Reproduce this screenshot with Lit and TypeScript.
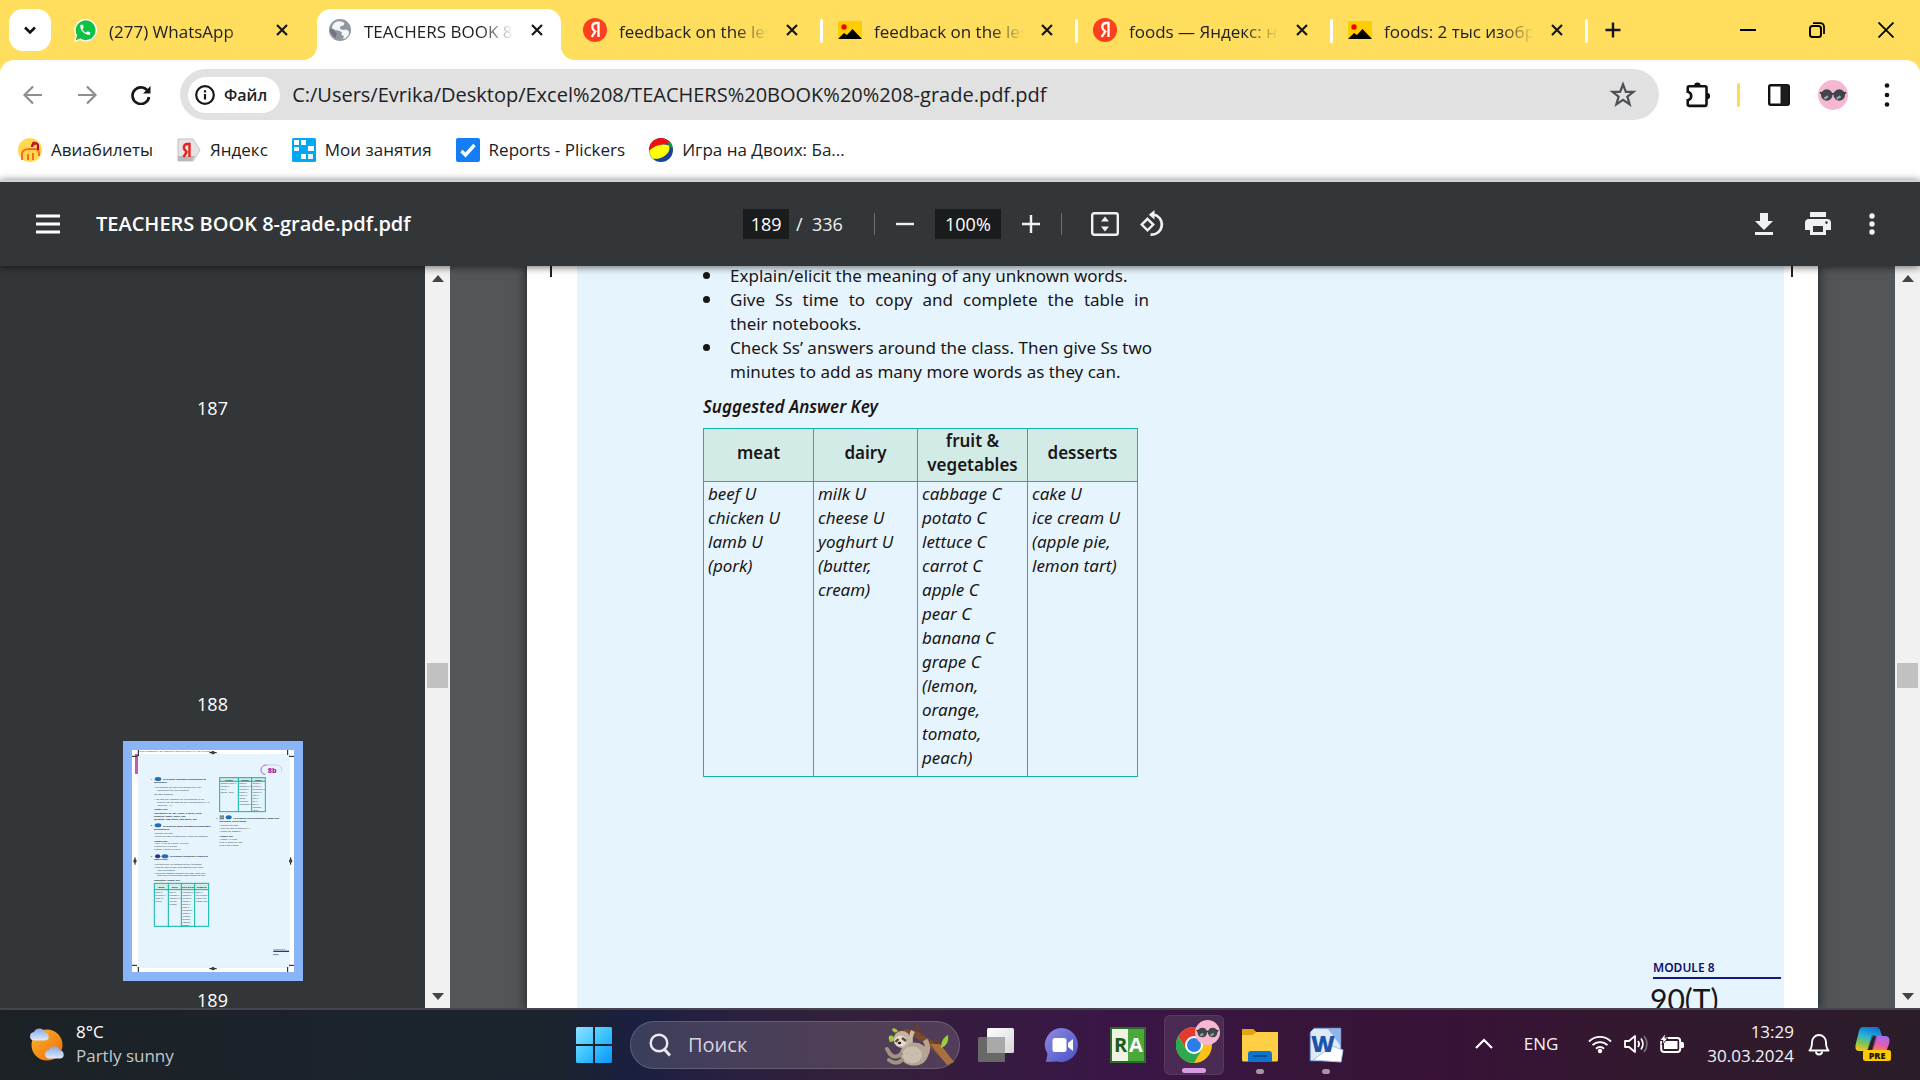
import { LitElement, html, svg, css, nothing } from "lit";
import { customElement } from "lit/decorators.js";
import { classMap } from "lit/directives/class-map.js";

const phone =
  "M6.62 10.79c1.44 2.83 3.76 5.14 6.59 6.59l2.2-2.2c.27-.27.67-.36 1.02-.24 1.12.37 2.33.57 3.57.57.55 0 1 .45 1 1V20c0 .55-.45 1-1 1-9.39 0-17-7.61-17-17 0-.55.45-1 1-1h3.5c.55 0 1 .45 1 1 0 1.25.2 2.45.57 3.57.11.35.03.74-.25 1.02l-2.2 2.2z";

const icon = (size: number, body: unknown, box = "0 0 24 24") =>
  html`<svg width=${size} height=${size} viewBox=${box} fill="none" aria-hidden="true">${body}</svg>`;

const favicons: Record<string, unknown> = {
  whatsapp: icon(24, svg`
    <path d="M1 24l1.800-6.300A11.300 11.300 0 1 1 7 22z" fill="#fff"/>
    <path d="M2.700 22.200l1.400-4.900A9.900 9.900 0 1 1 7.300 20.600z" fill="#0cc143"/>
    <g transform="translate(5.600 5.200) scale(.55)"><path d=${phone} fill="#fff"/></g>`),
  globe: icon(24, svg`
    <circle cx="12" cy="12" r="11" fill="#8f969e"/>
    <path d="M13.500 3.500l3 1.500-1 2.500-3 .8-.8 2.400 3.300 1.300 3.500-.6 2.500 2.200-.3 3.400-3 3.200-2.500.8.600-3-2.300-1.200.3-2.500-2.500-1.500-4-.8-3.400-2 .6-2.500L6 5l3.500-1.800z" fill="#f4f6f7"/>
    <path d="M2 11l4 1.500 2.800 3-1 4.200C4.500 18.500 2 15 2 11z" fill="#6e757d"/>`),
  yandex: icon(24, svg`
    <circle cx="12" cy="12" r="12" fill="#fc3f1d"/>
    <path d="M15.500 19V5h-2.200c-2.500 0-4 1.500-4 3.900 0 1.900.9 3 2.700 4.200M12.800 12.600L8.700 19" stroke="#fff" stroke-width="2.300"/>`),
  images: icon(24, svg`
    <path d="M0 3h24v18H0z" fill="#fc0"/><circle cx="6" cy="9" r="2.700" fill="#f00000"/>
    <path d="M0 21l6-6 3 2 5.500-6L24 21z" fill="#000"/>`),
  avia: icon(24, svg`
    <circle cx="12" cy="12" r="12" fill="#ffd84d"/>
    <path d="M4 22v-6c0-4 3-5 8-5h3c4 0 6 1 6 4v3M10 22v-6M15 22v-7" stroke="#fb6a2c" stroke-width="2"/>
    <path d="M14 9c0-5 6-5 6-1v4" stroke="#a5122a" stroke-width="2.200"/><circle cx="16" cy="5.500" r="2" fill="#c4173a"/>`),
  yaold: icon(24, svg`
    <path d="M1 1h15l7 11-7 11H1z" fill="#e4e4e4" stroke="#c2c2c2"/><path d="M1 18h17l-3 5H1z" fill="#b9b9b9"/>
    <path d="M12.500 19V6h-2c-2.300 0-3.600 1.400-3.600 3.500 0 1.700.9 2.800 2.400 3.600M10.300 13L6.500 19" stroke="#e8231d" stroke-width="2.400"/>`),
  lessons: icon(24, svg`
    <rect width="24" height="24" rx="1.500" fill="#00a8f0"/>
    <path d="M2 2h5v5H2zM9 2h5v5H9zM16 8h6v5h-6zM2 9h5v4H2zM2 16h5v5H2zM9 16h5v5H9zM16 16h5v5h-5z" fill="#fff"/>
    <path d="M2 9h5v4H2zM16 16h5v5h-5z" fill="#e6f7ff"/><path d="M1 15h7v7H1z" fill="#00a8f0"/>`),
  plickers: icon(24, svg`
    <rect width="24" height="24" rx="2" fill="#147df5"/>
    <path d="M5.500 13l4 4 9-10" stroke="#fff" stroke-width="3.400"/>`),
  ball: icon(24, svg`
    <circle cx="12" cy="12" r="12" fill="#17439b"/>
    <path d="M0 13A12 12 0 0 1 22 5.500C15 6 6 7 0 13z" fill="#f11010"/>
    <path d="M20 3a12 12 0 0 1 4 8c-2-2-3-3-5-4z" fill="#1c9a3b"/>
    <path d="M.3 12.500C6 7 14 5 20 7.500c2 5-2 10-8.500 12.500-3 1-6 1-8 .5C1.500 18 .3 15.500.3 12.500z" fill="#ff0"/>`),
};

const close = icon(16, svg`<path d="M3 3l10 10M13 3L3 13" stroke="#15171c" stroke-width="2.200"/>`, "0 0 16 16");

const tabs = [
  { title: "(277) WhatsApp", icon: "whatsapp", active: false, rule: false },
  { title: "TEACHERS BOOK 8-grade.pdf", icon: "globe", active: true, rule: false },
  { title: "feedback on the lesson", icon: "yandex", active: false, rule: true },
  { title: "feedback on the lesson", icon: "images", active: false, rule: true },
  { title: "foods — Яндекс: нашлось", icon: "yandex", active: false, rule: true },
  { title: "foods: 2 тыс изображений", icon: "images", active: false, rule: true },
];

const bookmarks = [
  ["avia", "Авиабилеты"],
  ["yaold", "Яндекс"],
  ["lessons", "Мои занятия"],
  ["plickers", "Reports - Plickers"],
  ["ball", "Игра на Двоих: Ба..."],
];

const foods = [
  { head: ["meat"], items: ["beef U", "chicken U", "lamb U", "(pork)"] },
  { head: ["dairy"], items: ["milk U", "cheese U", "yoghurt U", "(butter,", "cream)"] },
  {
    head: ["fruit &", "vegetables"],
    items: ["cabbage C", "potato C", "lettuce C", "carrot C", "apple C", "pear C", "banana C", "grape C", "(lemon,", "orange,", "tomato,", "peach)"],
  },
  { head: ["desserts"], items: ["cake U", "ice cream U", "(apple pie,", "lemon tart)"] },
];

// Tiny page preview; each entry is x, y, text.
const previewLines: [number, number, string][] = [
  [162, 174, "•  Go through the table with Ss and elicit the"],
  [172, 183, "equivalents for the examples."],
  [162, 194, "(Ss' own answers)"],
  [162, 210, "•  Ask and elicit answers for the question in the"],
  [172, 219, "Explain that we also use any in questions (e.g. Is"],
  [172, 227, "there any ...?)."],
  [162, 311, "•  Explain the task."],
  [162, 320, "•  Ss do the task in closed pairs. Check Ss' answers"],
  [162, 343, "1  any       4  a lot of    7  much     10  a few"],
  [162, 352, "2  much    5  a little      8  no"],
  [162, 361, "3  many    6  much     9  a lot of"],
  [162, 406, "•  Explain/elicit the meaning of any unknown"],
  [162, 415, "•  Give Ss time to copy and complete the table"],
  [172, 423, "their notebooks."],
  [162, 431, "•  Check Ss' answers around the class. Then give"],
  [172, 439, "minutes to add as many more words as they"],
  [358, 288, "•  Explain the task."],
  [358, 296, "•  Give Ss time to complete it."],
  [358, 305, "•  Check Ss' answers."],
  [358, 329, "1  some         4  a              7  any"],
  [358, 338, "2  any           5  much       8  a few"],
  [358, 347, "3  an             6  not            9  many"],
];
const previewHeads: [number, number, string][] = [
  [189, 151, "To present countable/uncountable &"],
  [162, 159, "quantifiers"],
  [162, 239, "Answer Key"],
  [162, 251, "Affirmative: so, any, many, a lot of, a few"],
  [162, 260, "Negative: many, much, any"],
  [162, 269, "Question: how many, how much, any"],
  [189, 290, "To practise using countable/uncountable"],
  [162, 299, "& quantifiers"],
  [162, 335, "Answer Key"],
  [210, 382, "To present vocabulary related to"],
  [162, 391, "food/drinks"],
  [162, 454, "Suggested Answer Key"],
  [400, 266, "To practise using quantifiers, some and"],
  [358, 275, "any/many, much/many"],
  [358, 320, "Answer Key"],
];

const previewTable = (xs: number[], top: number, head: number, bottom: number, heads: string[], cols: string[][]) => svg`
  <path d="M${xs[0]} ${top}H${xs[xs.length - 1]}V${head}H${xs[0]}z" fill="#d2ebe7"/>
  <path d="M${xs[0]} ${top}H${xs[xs.length - 1]}M${xs[0]} ${head}H${xs[xs.length - 1]}M${xs[0]} ${bottom}H${xs[xs.length - 1]}" stroke="#0bb5a8" stroke-width="3"/>
  ${xs.map((x) => svg`<path d="M${x} ${top - 1}V${bottom + 1}" stroke="#0bb5a8" stroke-width="3"/>`)}
  ${heads.map((h, i) => svg`<text class="ph" x=${(xs[i] + xs[i + 1]) / 2} y=${(top + head) / 2 + 3} text-anchor="middle">${h}</text>`)}
  ${cols.map((c, i) => c.map((t, j) => svg`<text class="pt" x=${xs[i] + 3} y=${head + 9 + j * 9}>${t}</text>`))}`;

const mark = (x: number, y: number, r: number) => svg`
  <g transform="translate(${x} ${y}) rotate(${r})"><path d="M-11 0H11" stroke="#111" stroke-width="3"/><circle r="5" fill="#222"/><circle r="1.500" fill="#bbb"/></g>`;

const preview = html`<svg class="preview" viewBox="96 60 486 666" aria-hidden="true">
  <path d="M96 60h486v666H96z" fill="#fff"/>
  <path d="M114 72h456v642H114z" fill="#e6f5fd"/>
  <path d="M105 72h9v60h-9z" fill="#c65ba6"/>
  <text class="pt" x="118" y="67">Excel 8 Teacher's 189_Module 8 / Excel 8 T 29/01/19 1:52 PM Page 90</text>
  <path d="M115 60v18M96 79h16M563 60v15M567 79h15M96 706h15M115 711v15M563 711v15M567 706h15" stroke="#111" stroke-width="3"/>
  ${mark(339, 68, 0)}${mark(339, 716, 0)}${mark(105, 393, 90)}${mark(572, 393, 90)}
  <path d="M500 105c-22 0-22 28-4 28" stroke="#b65bb2" stroke-width="3" fill="none"/>
  <path d="M495 105h34c18 0 18 18 14 22" stroke="#d5a6d6" stroke-width="2" fill="none"/>
  <text class="unit" x="503" y="129">8b</text>
  <g fill="#1f6fb5"><ellipse cx="174" cy="147" rx="10" ry="6"/><ellipse cx="174" cy="286" rx="10" ry="6"/><ellipse cx="195" cy="379" rx="10" ry="6"/><ellipse cx="386" cy="262" rx="9" ry="6"/></g>
  <ellipse cx="173" cy="379" rx="8" ry="6" fill="#2c318e"/>
  <path d="M359 256h6v6h-6z" fill="#3cab5e"/><path d="M365 256h7v6h-7z" fill="#e2574c"/><path d="M359 262h13v6h-13z" fill="#4f86d9"/>
  ${[[152, 150, "1"], [152, 289, "2"], [152, 382, "3"], [348, 266, "4"]].map(([x, y, t]) => svg`<text class="ph" x=${x} y=${y}>${t}</text>`)}
  ${previewLines.map(([x, y, t]) => svg`<text class="pt" x=${x} y=${y}>${t}</text>`)}
  ${previewHeads.map(([x, y, t]) => svg`<text class="ph" x=${x} y=${y}>${t}</text>`)}
  ${previewTable([359, 415, 455, 496], 143, 154, 245, ["drinks", "dishes", "other"], [
    ["orange juice U", "coffee U", "tea U", "(water, cola)"],
    ["soup U", "spaghetti U", "burger C", "salad U", "curry U", "(stew,", "chicken)", "potatoes C)"],
    ["sugar U", "bread U", "chocolate U", "biscuit C", "rice U", "egg C", "oil U", "salt U", "(pepper,", "flour)"],
  ])}
  ${previewTable([163, 205, 244, 284, 326], 460, 479, 589, ["meat", "dairy", "fruit & veg", "desserts"], foods.map((f) => f.items))}
  <text class="pt" x="520" y="661">MODULE 8</text><path d="M520 664h47" stroke="#2c2f8e" stroke-width="4"/><text class="ph" x="519" y="675">90(T)</text>
</svg>`;

const cloud = (x: number, y: number) => svg`
  <path transform="translate(${x} ${y})" d="M4.500 13.500a4.300 4.300 0 0 1 .4-8.500 6 6 0 0 1 11.200.6 4 4 0 0 1 .4 7.900z" fill="url(#cl)"/>`;

const shades = svg`<circle cx="12" cy="12" r="12" fill="#f6b8d0"/>
  <circle cx="7" cy="12" r="4.600" fill="#3f454a"/><circle cx="17" cy="12" r="4.600" fill="#3f454a"/>
  <path d="M5 15l3-2M15 15l3-2" stroke="#8fa3a8" stroke-width="2"/>
  <path d="M1.500 10l2 .8M22.500 10l-2 .8M11 11h2" stroke="#2d3033" stroke-width="1.300"/>`;

@customElement("app-root")
export class AppRoot extends LitElement {
  static styles = css`
    :host {
      display: flex;
      flex-direction: column;
      height: 100vh;
      overflow: hidden;
      background: #fff;
      color: #202124;
      font: 17px/24px "Open Sans", "Noto Sans", sans-serif;
    }
    * { box-sizing: border-box; }
    svg { display: block; flex: none; }
    button, input { font: inherit; color: inherit; border: 0; padding: 0; margin: 0; background: none; }
    button { display: flex; align-items: center; justify-content: center; cursor: pointer; }
    a { color: inherit; text-decoration: none; }

    /* tab strip */
    .strip { display: flex; height: 60px; padding-left: 9px; background: #ffde5e; align-items: stretch; }
    .search-tabs { width: 42px; height: 42px; margin: 9px 5px 0 0; border-radius: 14px; background: #fff; }
    .tab { position: relative; display: flex; flex: 0 1 255px; min-width: 0; align-items: center; padding: 0 17px 0 17px; }
    .tab.active::before { content: ""; position: absolute; inset: 9px 5px 0 6px; border-radius: 14px 14px 0 0; background: #fff; }
    .flare { position: absolute; bottom: 0; }
    .flare.l { left: -8px; }
    .flare.r { right: -9px; }
    .tab.rule::after { content: ""; position: absolute; right: -2px; top: 19px; width: 3px; height: 24px; border-radius: 2px; background: #fff; }
    .tab-main { position: relative; flex: 1; min-width: 0; height: 60px; justify-content: flex-start; gap: 12px; }
    .tab-main svg { width: 24px; }
    .tab-title { flex: 1; text-align: left; white-space: nowrap; overflow: hidden; padding-top: 3px; mask-image: linear-gradient(90deg, #000 116px, transparent 150px); }
    .tab-close { position: relative; width: 24px; height: 24px; margin-left: 10px; }
    .new-tab { width: 54px; }
    .window { display: flex; margin-left: auto; }
    .window button { width: 69px; }

    /* toolbar */
    .bar { background: linear-gradient(#ffde5e, #ffde5e) 0 0 / 100% 12px no-repeat; }
    .nav { display: flex; align-items: center; height: 69px; padding: 0 6px; border-radius: 14px 14px 0 0; background: #fff; }
    .nav > button { width: 54px; height: 48px; }
    .omni { display: flex; flex: 1; align-items: center; height: 51px; margin: 0 12px 0 12px; padding: 0 21px 0 8px; border-radius: 26px; background: #e1e1e1; }
    .chip { height: 36px; padding: 0 13px 0 7px; gap: 9px; border-radius: 18px; background: #fff; font-size: 16px; font-weight: 600; }
    .url { flex: 1; min-width: 0; margin-left: 12px; height: 40px; font-size: 20px; outline: none; }
    .sep { width: 3px; height: 24px; margin: 0 12px; border-radius: 2px; background: #ffd94f; }

    .marks { display: flex; gap: 24px; height: 51px; padding: 0 18px 9px; align-items: center; margin: 0; }
    .marks a { display: flex; gap: 9px; align-items: center; }

    /* viewer toolbar */
    .pdfbar { position: relative; z-index: 2; display: grid; grid-template-columns: 1fr auto 1fr; align-items: center; height: 86px; padding: 0 21px; border-top: 2px solid #d0d4d6; background: #323639; color: #f1f1f1; box-shadow: 0 1px 8px rgba(0, 0, 0, 0.6); }
    .pdfbar button { width: 54px; height: 48px; }
    .lead { display: flex; align-items: center; gap: 21px; }
    .lead h1 { margin: 0; font-size: 20px; font-weight: 600; color: #fff; }
    .mid { display: flex; align-items: center; }
    .field { width: 46px; height: 30px; background: #191b1c; text-align: center; font-size: 18px; color: #fff; }
    .field.zoom { width: 66px; }
    .total { margin: 0 31px 0 7px; font-size: 18px; white-space: pre; }
    .split { width: 1px; height: 22px; background: #6d7073; }
    .mid .step { width: 42px; margin: 0 9px; }
    .mid .wide { width: 48px; }
    .views { display: flex; margin-left: 19px; }
    .tail { display: flex; justify-content: flex-end; }

    /* viewer body */
    .viewer { display: flex; flex: 1; min-height: 0; background: #525659; }
    .thumbs { display: flex; flex: none; flex-direction: column; align-items: center; gap: 26px; width: 425px; overflow: hidden; margin: 0; padding: 131px 0 0; background: #323639; color: #fff; list-style: none; }
    .thumbs li { display: flex; flex: none; flex-direction: column; align-items: center; gap: 8px; font-size: 18px; line-height: 22px; }
    .blank { width: 180px; height: 240px; }
    .sheet { display: block; width: 180px; height: 240px; padding: 9px; background: #8ab4f8; }
    .preview { width: 162px; height: 222px; }
    .pt, .ph { font-family: "Open Sans", sans-serif; font-size: 7px; fill: #22303a; }
    .ph { font-weight: 700; fill: #1c262c; }
    .unit { font-family: "Open Sans", sans-serif; font-weight: 800; font-size: 22px; fill: #b02aa6; }
    .scroll { display: flex; flex: none; flex-direction: column; align-items: center; width: 25px; padding: 9px 0 8px; background: #f1f1f1; }
    .scroll .grip { width: 21px; height: 25px; background: #c1c1c1; }
    .scroll .run { flex: 60; }
    .scroll .run.after { flex: 48; }

    .canvas { flex: 1; min-width: 0; overflow: hidden; padding: 0 77px; }
    .page { position: relative; display: flex; height: 100%; padding: 0 34px 0 50px; background: #fff; box-shadow: 0 0 10px 2px rgba(0, 0, 0, 0.5); }
    .crop { position: absolute; top: 0; width: 2px; height: 11px; background: #222; }
    .crop.l { left: 23px; }
    .crop.r { right: 25px; }
    .paper { display: flex; flex: 1; flex-direction: column; min-height: 0; padding: 0 3px 0 126px; background: #e6f5fd; color: #1a1617; font-family: "Noto Sans", "Open Sans", sans-serif; font-size: 17px; line-height: 24px; }
    .steps { width: 446px; margin: -2px 0 0; padding: 0 0 0 27px; list-style: none; }
    .steps li { position: relative; }
    .steps li::before { content: ""; position: absolute; left: -27px; top: 8px; width: 7px; height: 7px; border-radius: 50%; background: #1a1617; }
    .steps span { display: block; white-space: nowrap; }
    .steps .full { text-align: justify; text-align-last: justify; }
    h2 { margin: 11px 0 9px; font-size: 17px; line-height: 24px; font-weight: 600; font-style: italic; }
    table { width: 434px; border-collapse: collapse; table-layout: fixed; }
    .c0 { width: 110px; } .c1 { width: 104px; } .c2 { width: 110px; } .c3 { width: 110px; }
    th, td { border: 1px solid #12b5a9; vertical-align: top; }
    th { height: 53px; padding: 0 0 4px; vertical-align: middle; background: #d2ebe7; font-size: 17px; font-weight: 600; }
    td { height: 295px; padding: 0 0 0 4px; font-style: italic; white-space: nowrap; }
    th span, td span { display: block; }
    .foot { width: 131px; margin: auto 0 -11px auto; }
    .module { margin-left: 3px; border-bottom: 2px solid #131a78; color: #130f70; font-size: 12px; line-height: 18px; font-weight: 600; }
    .folio { font: 30px/40px Lato, "Open Sans", sans-serif; }

    /* taskbar */
    .taskbar { position: relative; z-index: 3; display: grid; grid-template-columns: 1fr auto 1fr; flex: none; align-items: center; height: 72px; border-top: 2px solid #47444e; color: #f4f2f5;
      background: linear-gradient(90deg, #1c2225 0%, #1b232c 20%, #1b242e 29%, #1a1f40 33%, #2a2040 38%, #33203a 45%, #3a1647 58%, #37153a 68%, #381238 75%, #33182f 85%, #2a1d29 100%); }
    .weather { display: flex; gap: 10px; padding: 0 0 2px 28px; align-items: center; text-align: left; justify-self: start; }
    .weather .sky { color: #c5c8ca; display: block; }
    .weather b { display: block; font-weight: 400; color: #fff; }
    .apps { display: flex; align-items: center; gap: 6px; }
    .app { position: relative; width: 60px; height: 60px; border-radius: 6px; }
    .app.on { background: rgba(255, 255, 255, 0.09); border: 1px solid rgba(255, 255, 255, 0.08); }
    .app.open::after { content: ""; position: absolute; bottom: 1px; left: 50%; width: 8px; height: 5px; margin-left: -4px; border-radius: 3px; background: #a395a6; }
    .app.on::after { width: 24px; margin-left: -12px; background: #d99be6; }
    .badge { position: absolute; top: 4px; right: 3px; }
    .find { display: flex; align-items: center; width: 330px; height: 48px; padding: 0 5px 0 17px; gap: 16px; border: 1px solid rgba(255, 255, 255, 0.16); border-radius: 24px; background: rgba(255, 255, 255, 0.14); }
    .find input { flex: 1; min-width: 0; font-size: 20px; outline: none; }
    .find input::placeholder { color: #d7d3dc; opacity: 1; }
    .tray { display: flex; align-items: center; justify-self: end; padding: 0 29px 2px 0; }
    .chev { width: 48px; height: 48px; }
    .lang { width: 66px; height: 48px; }
    .status { gap: 12px; width: 124px; height: 48px; }
    .clock { flex-direction: column; align-items: flex-end; width: 96px; margin-right: 13px; text-align: right; }
    .bell { width: 24px; height: 48px; margin-right: 24px; }
  `;

  private tab(t: (typeof tabs)[number]) {
    return html`<div class=${classMap({ tab: true, active: t.active, rule: t.rule })}>
      ${t.active
        ? html`<svg class="flare l" width="14" height="14" viewBox="0 0 14 14"><path d="M14 0v14H0A14 14 0 0 0 14 0z" fill="#fff"/></svg>
            <svg class="flare r" width="14" height="14" viewBox="0 0 14 14"><path d="M0 0v14h14A14 14 0 0 1 0 0z" fill="#fff"/></svg>`
        : nothing}
      <button class="tab-main">${favicons[t.icon]}<span class="tab-title">${t.title}</span></button>
      <button class="tab-close" aria-label="Close tab">${close}</button>
    </div>`;
  }

  private arrows(up: boolean) {
    return html`<svg width="12" height="7" viewBox="0 0 12 7"><path d=${up ? "M0 7h12L6 0z" : "M0 0h12L6 7z"} fill="#444"/></svg>`;
  }

  private scrollbar() {
    return html`<div class="scroll">${this.arrows(true)}<div class="run"></div><div class="grip"></div><div class="run after"></div>${this.arrows(false)}</div>`;
  }

  private browser() {
    return html`
      <header class="strip">
        <button class="search-tabs" aria-label="Search tabs">${icon(16, svg`<path d="M3 5.500l5 5 5-5" stroke="#111" stroke-width="2.600"/>`, "0 0 16 16")}</button>
        ${tabs.map((t) => this.tab(t))}
        <button class="new-tab" aria-label="New tab">${icon(16, svg`<path d="M8 .5v15M.5 8h15" stroke="#15171c" stroke-width="2.400"/>`, "0 0 16 16")}</button>
        <div class="window">
          <button aria-label="Minimize">${icon(16, svg`<path d="M0 8h16" stroke="#000" stroke-width="2"/>`, "0 0 16 16")}</button>
          <button aria-label="Restore">${icon(16, svg`<rect x="1" y="4" width="11" height="11" rx="2.500" stroke="#000" stroke-width="2"/><path d="M4 1.200h7.500A3.500 3.500 0 0 1 15 4.700V12" stroke="#000" stroke-width="1.800"/>`, "0 0 16 16")}</button>
          <button aria-label="Close">${icon(16, svg`<path d="M.5.5l15 15M15.500.5l-15 15" stroke="#000" stroke-width="1.800"/>`, "0 0 16 16")}</button>
        </div>
      </header>
      <div class="bar"><div class="nav">
        <button aria-label="Back">${icon(20, svg`<path d="M19 10H2M10 1.500L1.500 10l8.500 8.500" stroke="#8e8e8e" stroke-width="2.200"/>`, "0 0 20 20")}</button>
        <button aria-label="Forward">${icon(20, svg`<path d="M1 10h17M10 1.500l8.500 8.500-8.500 8.500" stroke="#8e8e8e" stroke-width="2.200"/>`, "0 0 20 20")}</button>
        <button aria-label="Reload">${icon(20, svg`<path d="M17.500 7.500A8.300 8.300 0 1 0 18 12" stroke="#15171c" stroke-width="2.700"/><path d="M19.500 1v7.500H12z" fill="#15171c"/>`, "0 0 20 20")}</button>
        <div class="omni">
          <button class="chip">${icon(20, svg`<circle cx="10" cy="10" r="8.800" stroke="#15171c" stroke-width="2.200"/><path d="M10 9v5.500M10 5.300v2.200" stroke="#15171c" stroke-width="2.200"/>`, "0 0 20 20")}Файл</button>
          <input class="url" aria-label="Address" value="C:/Users/Evrika/Desktop/Excel%208/TEACHERS%20BOOK%20%208-grade.pdf.pdf" />
          <button aria-label="Bookmark">${icon(30, svg`<path d="M12 3.500l2.300 6h6l-4.800 3.800 1.800 6.200L12 15.900l-5.300 3.600 1.800-6.200-4.800-3.800h6z" stroke="#4e5256" stroke-width="1.800"/>`)}</button>
        </div>
        <button aria-label="Extensions">${icon(28, svg`<path d="M4.500 4.500h13.500a1.300 1.300 0 0 1 1.300 1.300V20a1.300 1.300 0 0 1-1.300 1.300H4.500A1.300 1.300 0 0 1 3.200 20v-3.500c4-1 4-6.300 0-7.300V5.800a1.300 1.300 0 0 1 1.300-1.300z" stroke="#111" stroke-width="2.200"/><path d="M8.700 4a2.800 2.800 0 0 1 5.600 0zM19.500 10a2.900 2.900 0 0 1 0 5.800z" fill="#111"/>`)}</button>
        <span class="sep"></span>
        <button aria-label="Side panel">${icon(24, svg`<rect x="2.200" y="2.200" width="19.600" height="19.600" rx="1.500" stroke="#111" stroke-width="2.400"/><path d="M13.500 2h8v20h-8z" fill="#1b1c20"/>`)}</button>
        <button aria-label="Profile">${icon(30, shades)}</button>
        <button aria-label="Menu">${icon(24, svg`<circle cx="12" cy="2.500" r="2.300" fill="#111"/><circle cx="12" cy="12" r="2.300" fill="#111"/><circle cx="12" cy="21.500" r="2.300" fill="#111"/>`)}</button>
      </div></div>
      <nav class="marks">${bookmarks.map(([i, t]) => html`<a href="#">${favicons[i]}<span>${t}</span></a>`)}</nav>`;
  }

  private pdfbar() {
    return html`<div class="pdfbar">
      <div class="lead">
        <button aria-label="Menu">${icon(24, svg`<path d="M0 4h24M0 12h24M0 20h24" stroke="#fff" stroke-width="3"/>`)}</button>
        <h1>TEACHERS BOOK 8-grade.pdf.pdf</h1>
      </div>
      <div class="mid">
        <input class="field" aria-label="Page number" value="189" /><span class="total">/  336</span>
        <span class="split"></span>
        <button class="step" aria-label="Zoom out">${icon(18, svg`<path d="M0 9h18" stroke="#f1f1f1" stroke-width="2.400"/>`, "0 0 18 18")}</button>
        <input class="field zoom" aria-label="Zoom level" value="100%" />
        <button class="step" aria-label="Zoom in">${icon(18, svg`<path d="M0 9h18M9 0v18" stroke="#f1f1f1" stroke-width="2.400"/>`, "0 0 18 18")}</button>
        <span class="split"></span>
        <div class="views">
          <button class="wide" aria-label="Fit to page">${icon(28, svg`<rect x="1.200" y="3.200" width="25.600" height="21.600" rx="2" stroke="#f1f1f1" stroke-width="2.400"/><path d="M14 6.500l4 5h-8zM14 21.500l4-5h-8z" fill="#f1f1f1"/>`, "0 0 28 28")}</button>
          <button class="wide" aria-label="Rotate">${icon(28, svg`<path d="M8.500 8.800l5.800 5.800-5.800 5.800-5.800-5.800z" stroke="#f1f1f1" stroke-width="2.400"/><path d="M14 4.500a10 10 0 1 1-2.500 20" stroke="#f1f1f1" stroke-width="2.600"/><path d="M15.500 0v9.500L9.800 4.700z" fill="#f1f1f1"/>`, "0 0 28 28")}</button>
        </div>
      </div>
      <div class="tail">
        <button aria-label="Download">${icon(24, svg`<path d="M8 1h8v8h5l-9 9-9-9h5zM3 20h18v3H3z" fill="#f1f1f1"/>`)}</button>
        <button aria-label="Print">${icon(26, svg`<path d="M5 1h16v5H5zM4 8h18a4 4 0 0 1 4 4v7h-5v5H5v-5H0v-7a4 4 0 0 1 4-4zM8 15v6h10v-6zM21.500 10.300a1.300 1.300 0 1 0 0 2.600 1.300 1.300 0 0 0 0-2.600z" fill="#f1f1f1" fill-rule="evenodd"/>`, "0 0 26 26")}</button>
        <button aria-label="More">${icon(24, svg`<circle cx="12" cy="4" r="2.700" fill="#f1f1f1"/><circle cx="12" cy="12" r="2.700" fill="#f1f1f1"/><circle cx="12" cy="20" r="2.700" fill="#f1f1f1"/>`)}</button>
      </div>
    </div>`;
  }

  private viewer() {
    return html`<main class="viewer">
      <ul class="thumbs">
        <li>187</li>
        <li><span class="blank"></span>188</li>
        <li><a class="sheet" href="#" aria-label="Page 189">${preview}</a>189</li>
      </ul>
      ${this.scrollbar()}
      <div class="canvas"><article class="page">
        <i class="crop l"></i><i class="crop r"></i>
        <div class="paper">
          <ul class="steps">
            <li><span>Explain/elicit the meaning of any unknown words.</span></li>
            <li><span class="full">Give Ss time to copy and complete the table in</span><span>their notebooks.</span></li>
            <li><span class="full">Check Ss’ answers around the class. Then give Ss two</span><span>minutes to add as many more words as they can.</span></li>
          </ul>
          <h2>Suggested Answer Key</h2>
          <table>
            <thead><tr>${foods.map((f, i) => html`<th class="c${i}">${f.head.map((h) => html`<span>${h}</span>`)}</th>`)}</tr></thead>
            <tbody><tr>${foods.map((f) => html`<td>${f.items.map((t) => html`<span>${t}</span>`)}</td>`)}</tr></tbody>
          </table>
          <footer class="foot"><div class="module">MODULE 8</div><div class="folio">90(T)</div></footer>
        </div>
      </article></div>
      ${this.scrollbar()}
    </main>`;
  }

  private sloth() {
    return html`<svg width="70" height="42" viewBox="0 0 70 42" aria-hidden="true">
      <path d="M10 9C20 4 28 4 36 9l14 9 20 20-7 2-17-16-15-11C24 9 18 8 12 12z" fill="#7a4a2c"/>
      <path d="M46 20l10 0 14 18-7 3z" fill="#a8703f"/><path d="M32 0c2 6 6 8 6 12M56 19l-6-3" stroke="#6b3f26" stroke-width="2" fill="none"/>
      <path d="M9 12c-5-2-5 2-3 6 4 0 5-3 3-6zM14 7c-3-4-6-3-6-1 2 3 4 3 6 1zM57 24c0-7 3-11 7-13 1 6-1 11-7 13z" fill="#9bcf3a"/>
      <path d="M41 16c4 6 3 13-2 19" stroke="#b7a393" stroke-width="5" fill="none"/>
      <path d="M29 7c-2 4-3 7-2 12" stroke="#cbbbaa" stroke-width="4" fill="none"/>
      <ellipse cx="30" cy="30" rx="14" ry="11.500" fill="#b5a394"/><ellipse cx="28" cy="31" rx="10" ry="8.500" fill="#cbbdaf"/>
      <path d="M17 30c-4 4-8 3-11 0l-3-5M18 36c-4 4-9 3-13 0" stroke="#a39181" stroke-width="4" stroke-linecap="round" fill="none"/>
      <circle cx="18" cy="15.500" r="8.500" fill="#c4b3a2"/><ellipse cx="16.500" cy="17" rx="6" ry="5.500" fill="#e6dbcf"/>
      <path d="M11.500 18l3-3M18 14l4 3" stroke="#5a463a" stroke-width="2.400"/><ellipse cx="15.500" cy="19" rx="1.800" ry="1.200" fill="#2b211c"/>
    </svg>`;
  }

  private taskbar() {
    return html`<footer class="taskbar">
      <button class="weather">
        <svg width="38" height="36" viewBox="0 0 38 36" aria-hidden="true">
          <defs>
            <linearGradient id="sn" x1="0" y1="0" x2="1" y2="1"><stop stop-color="#fbb62c"/><stop offset="1" stop-color="#ee6a0b"/></linearGradient>
            <linearGradient id="cl" x1="0" y1="0" x2="0" y2="1"><stop stop-color="#86a9e6"/><stop offset="1" stop-color="#dfe9fb"/></linearGradient>
          </defs>
          <circle cx="19" cy="19" r="15.500" fill="url(#sn)"/>${cloud(1, 1)}${cloud(16, 19)}
        </svg>
        <span><b>8°C</b><span class="sky">Partly sunny</span></span>
      </button>
      <div class="apps">
        <button class="app" aria-label="Start"><svg width="36" height="36" viewBox="0 0 36 36"><defs><linearGradient id="w" x1="0" y1="0" x2="1" y2="1" ><stop stop-color="#8fe3ff"/><stop offset=".5" stop-color="#3cc4ff"/><stop offset="1" stop-color="#0a95fb"/></linearGradient></defs><path d="M1 0h16v17H0V1zM19 0h16l1 1v16H19zM0 19h17v17H1l-1-1zM19 19h17v16l-1 1H19z" fill="url(#w)"/></svg></button>
        <label class="find">${icon(24, svg`<circle cx="11" cy="10" r="8.300" stroke="#eceaf0" stroke-width="2.400"/><path d="M16.500 16.500L22 22.500" stroke="#eceaf0" stroke-width="2.800"/>`)}
          <input aria-label="Поиск" placeholder="Поиск" />${this.sloth()}</label>
        <button class="app" aria-label="Task view"><svg width="36" height="36" viewBox="0 0 36 36"><defs><linearGradient id="tv" x1="0" y1="0" x2="1" y2="1"><stop stop-color="#fff"/><stop offset="1" stop-color="#d6d6d6"/></linearGradient></defs><rect y="10" width="27" height="25" rx="1.500" fill="#686868"/><rect x="9" y="1" width="27" height="25" rx="1.500" fill="url(#tv)"/><path d="M9 10h18v16H9z" fill="#a9a9a9"/></svg></button>
        <button class="app" aria-label="Chat"><svg width="36" height="36" viewBox="0 0 36 36"><defs><linearGradient id="ch" x1="0" y1="0" x2="1" y2="1"><stop stop-color="#8d8be4"/><stop offset="1" stop-color="#4a52c4"/></linearGradient></defs><path d="M18 1a17 17 0 1 1-5 33.500L2 35l1.500-8A17 17 0 0 1 18 1z" fill="url(#ch)"/><rect x="8.500" y="11" width="14" height="14" rx="2.500" fill="#fff"/><path d="M24 16l5-4v12l-5-4z" fill="#fff"/></svg></button>
        <button class="app" aria-label="RA"><svg width="36" height="36" viewBox="0 0 36 36"><path d="M0 0h36v36H0z" fill="#2c6b2a"/><path d="M2 2h16v32H2z" fill="#eef3e2"/><path d="M18 2h16v32H18z" fill="#4aa83d"/><text x="4" y="25" font-family="Open Sans" font-weight="700" font-size="20" fill="#1d5a20">R</text><text x="19" y="25" font-family="Open Sans" font-weight="700" font-size="20" fill="#fff">A</text></svg></button>
        <button class="app open on" aria-label="Chrome">
          <svg width="36" height="36" viewBox="0 0 36 36"><circle cx="18" cy="18" r="18" fill="#fbc116"/><path d="M2.400 9A18 18 0 0 1 33.600 9H18l-7.800 13.500z" fill="#e33b2e"/><path d="M2.400 9A18 18 0 0 0 18 36l7.800-13.500-7.800 4.500-7.800-4.500z" fill="#2da94f"/><circle cx="18" cy="18" r="9" fill="#fff"/><circle cx="18" cy="18" r="7" fill="#2b7de9"/></svg>
          <span class="badge">${icon(25, shades)}</span>
        </button>
        <button class="app open" aria-label="Explorer"><svg width="36" height="36" viewBox="0 0 36 36"><path d="M0 4a2 2 0 0 1 2-2h9l4 4H0z" fill="#d99a0b"/><path d="M0 5h36v28a1.500 1.500 0 0 1-1.500 1.500h-33A1.500 1.500 0 0 1 0 33z" fill="#ffcf48"/><path d="M0 2h11l3 3-3 3H0z" fill="#e3a40f"/><path d="M6 35V27a3 3 0 0 1 3-3h18a3 3 0 0 1 3 3v8z" fill="#0c75cf"/><path d="M11 29h14" stroke="#0a4d92" stroke-width="2"/></svg></button>
        <button class="app open" aria-label="Word"><svg width="36" height="36" viewBox="0 0 36 36"><path d="M6 1h27v33H2V5z" fill="#dfeaf8" stroke="#2a5fb0"/><path d="M20 2h12v16z" fill="#8fb6ea"/><path d="M5 33l19-14 11 4-2 12z" fill="#fff" stroke="#a8c1e6"/><text x="3" y="25" font-family="Open Sans" font-weight="800" font-size="23" fill="#1c54a8">W</text></svg></button>
      </div>
      <div class="tray">
        <button class="chev" aria-label="Hidden icons">${icon(18, svg`<path d="M1 13l8-8 8 8" stroke="#fff" stroke-width="2.200"/>`, "0 0 18 18")}</button>
        <button class="lang">ENG</button>
        <button class="status" aria-label="Network, sound, battery">
          ${icon(24, svg`<path d="M1 9.500a15.500 15.500 0 0 1 22 0M4.500 13.200a10.600 10.600 0 0 1 15 0M8 16.700a5.700 5.700 0 0 1 8 0" stroke="#fff" stroke-width="1.900"/><circle cx="12" cy="19" r="2.200" fill="#fff"/>`)}
          ${icon(24, svg`<path d="M1 9h4l6-5v16l-6-5H1z" stroke="#fff" stroke-width="1.800" stroke-linejoin="round"/><path d="M14 9a5 5 0 0 1 0 6M17 6.500a9 9 0 0 1 0 11" stroke="#fff" stroke-width="1.800"/><path d="M20 4a12.500 12.500 0 0 1 0 16" stroke="#796a78" stroke-width="1.800"/>`)}
          ${icon(24, svg`<rect x="1.200" y="6" width="19" height="14" rx="3" stroke="#fff" stroke-width="2"/><rect x="4" y="9" width="13.500" height="8" fill="#fff"/><path d="M21 10h1.500a1.500 1.500 0 0 1 1.500 1.500v3a1.500 1.500 0 0 1-1.500 1.500H21z" fill="#fff"/><path d="M5.500 1L0 8.500h3L2 13l6-7H5z" fill="#fff" stroke="#331a30" stroke-width="1"/>`)}
        </button>
        <button class="clock"><span>13:29</span><span>30.03.2024</span></button>
        <button class="bell" aria-label="Notifications">${icon(24, svg`<path d="M2.500 18.500c2-2 2.500-3.500 2.500-8.500a7 7 0 0 1 14 0c0 5 .5 6.500 2.500 8.500z" stroke="#fff" stroke-width="1.900" stroke-linejoin="round"/><path d="M9 19.500a3 3 0 0 0 6 0" stroke="#fff" stroke-width="1.900"/>`)}</button>
        <button aria-label="Copilot"><svg width="36" height="36" viewBox="0 0 36 36"><defs>
          <linearGradient id="ca" x1=".6" y1="0" x2=".3" y2="1"><stop stop-color="#1470d6"/><stop offset=".4" stop-color="#27b5d6"/><stop offset=".7" stop-color="#7cc35a"/><stop offset="1" stop-color="#f5c518"/></linearGradient>
          <linearGradient id="cb" x1=".6" y1="0" x2=".3" y2="1"><stop stop-color="#a46bf0"/><stop offset=".5" stop-color="#e45cae"/><stop offset="1" stop-color="#fb8a5a"/></linearGradient></defs>
          <path d="M8 1h13c3 0 4 2 5 6l1 3h-6c-3 0-4 2-5 5l-2 6c-1 3-2 4-5 4H4c-4 0-4-4-3-8L4 5c1-3 2-4 4-4z" fill="url(#ca)"/>
          <path d="M21 10h9c5 0 5 4 4 8l-3 8H14c3-1 3-3 4-6l2-8c.300-1 .500-2 1-2z" fill="url(#cb)"/>
          <path d="M17 9l5 1-4 14-6 1z" fill="#2b1b30" opacity=".55"/>
          <rect x="8" y="24" width="28" height="11" rx="2.500" fill="#ffc800"/><text x="22" y="33" text-anchor="middle" font-family="Open Sans" font-weight="800" font-size="9" fill="#1b1400">PRE</text></svg></button>
      </div>
    </footer>`;
  }

  render() {
    return html`${this.browser()}${this.pdfbar()}${this.viewer()}${this.taskbar()}`;
  }
}
